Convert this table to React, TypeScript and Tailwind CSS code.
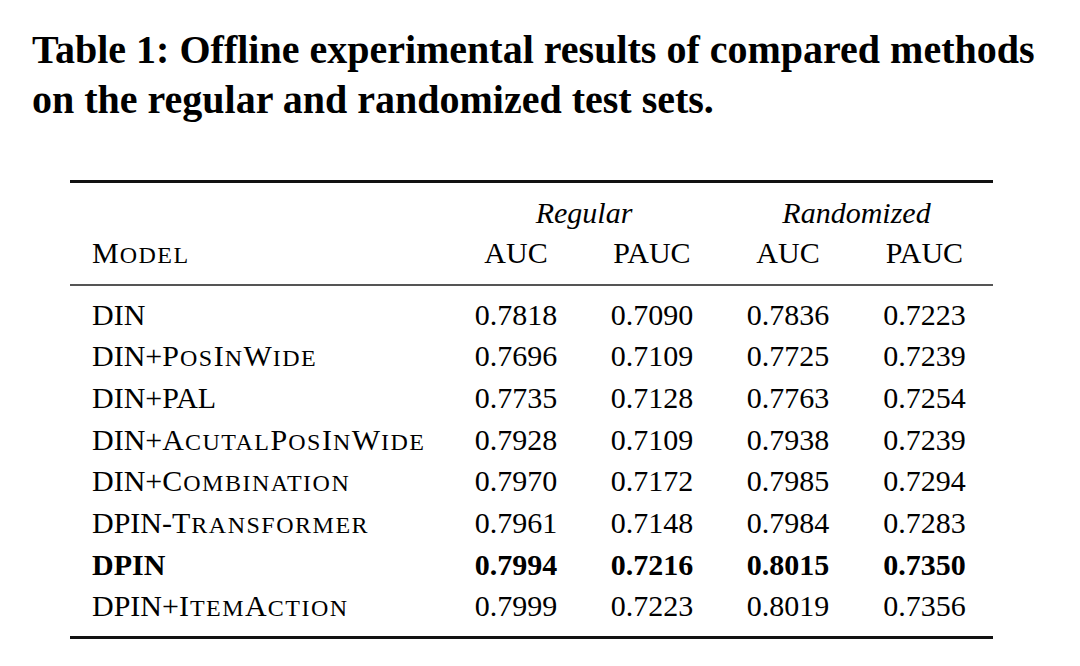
import React from "react";

type Row = { name: React.ReactNode; values: string[]; bold?: boolean };

// hand-rolled small caps, the synthesized ones come out too small
function SC({ children }: { children: string }) {
  const parts = children.match(/[A-Z]+|[^A-Z]+/g) ?? [];
  return (
    <span className="tracking-[1px]">
      {parts.map((p, i) =>
        /[A-Z]/.test(p[0]) ? (
          <span key={i}>{p}</span>
        ) : (
          <span key={i} className="text-[24px] uppercase tracking-[1.5px]">
            {p}
          </span>
        )
      )}
    </span>
  );
}

const rows: Row[] = [
  { name: <>DIN</>, values: ["0.7818", "0.7090", "0.7836", "0.7223"] },
  {
    name: (
      <>
        DIN+<SC>PosInWide</SC>
      </>
    ),
    values: ["0.7696", "0.7109", "0.7725", "0.7239"],
  },
  { name: <>DIN+PAL</>, values: ["0.7735", "0.7128", "0.7763", "0.7254"] },
  {
    name: (
      <>
        DIN+<SC>AcutalPosInWide</SC>
      </>
    ),
    values: ["0.7928", "0.7109", "0.7938", "0.7239"],
  },
  {
    name: (
      <>
        DIN+<SC>Combination</SC>
      </>
    ),
    values: ["0.7970", "0.7172", "0.7985", "0.7294"],
  },
  {
    name: (
      <>
        DPIN-<SC>Transformer</SC>
      </>
    ),
    values: ["0.7961", "0.7148", "0.7984", "0.7283"],
  },
  { name: <>DPIN</>, values: ["0.7994", "0.7216", "0.8015", "0.7350"], bold: true },
  {
    name: (
      <>
        DPIN+<SC>ItemAction</SC>
      </>
    ),
    values: ["0.7999", "0.7223", "0.8019", "0.7356"],
  },
];

const cols = "grid grid-cols-[378px_136px_136px_136px_137px]";

export default function App() {
  return (
    <div className="h-[666px] w-[1080px] overflow-hidden bg-white text-black font-['Liberation_Serif',serif]">
      <div className="pl-[32px] pt-[25px] text-[40px] font-bold leading-[50px]">
        <div>Table 1: Offline experimental results of compared methods</div>
        <div>on the regular and randomized test sets.</div>
      </div>

      <div className="ml-[70px] mt-[55px] w-[923px] text-[30px]">
        <div className="h-[2.5px] bg-[#111]" />
        <div className="pt-[7px]">
          <div className={`${cols} h-[40px] items-center italic`}>
            <div />
            <div className="col-span-2 text-center">Regular</div>
            <div className="col-span-2 text-center">Randomized</div>
          </div>
          <div className={`${cols} h-[40px] items-center`}>
            <div className="pl-[22px]">
              <SC>Model</SC>
            </div>
            <div className="text-center">AUC</div>
            <div className="text-center">PAUC</div>
            <div className="text-center">AUC</div>
            <div className="text-center">PAUC</div>
          </div>
        </div>
        <div className="mt-[14px] h-[2px] bg-[#555]" />
        <div className="pt-[6px] pb-[11px]">
          {rows.map((r, i) => (
            <div
              key={i}
              className={`${cols} h-[41.7px] items-center ${r.bold ? "font-bold" : ""}`}
            >
              <div className="pl-[22px] whitespace-nowrap">{r.name}</div>
              {r.values.map((v, j) => (
                <div key={j} className="text-center">
                  {v}
                </div>
              ))}
            </div>
          ))}
        </div>
        <div className="h-[2.5px] bg-[#111]" />
      </div>
    </div>
  );
}
